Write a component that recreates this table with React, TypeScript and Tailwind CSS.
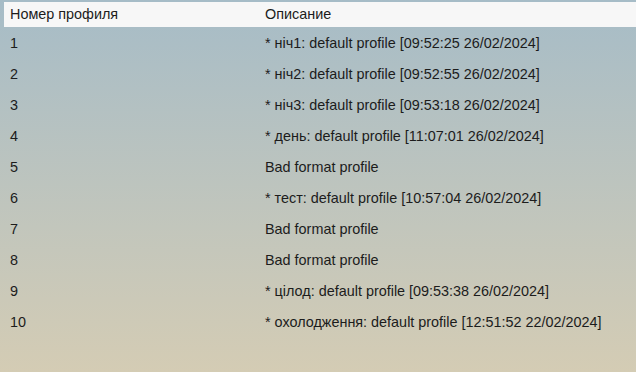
const PROFILES = [
  { id: 1, desc: '* ніч1: default profile [09:52:25 26/02/2024]' },
  { id: 2, desc: '* ніч2: default profile [09:52:55 26/02/2024]' },
  { id: 3, desc: '* ніч3: default profile [09:53:18 26/02/2024]' },
  { id: 4, desc: '* день: default profile [11:07:01 26/02/2024]' },
  { id: 5, desc: 'Bad format profile' },
  { id: 6, desc: '* тест: default profile [10:57:04 26/02/2024]' },
  { id: 7, desc: 'Bad format profile' },
  { id: 8, desc: 'Bad format profile' },
  { id: 9, desc: '* цілод: default profile [09:53:38 26/02/2024]' },
  { id: 10, desc: '* охолодження: default profile [12:51:52 22/02/2024]' }
];

export default function App() {
  return (
    <div
      className="h-screen w-full overflow-hidden bg-gradient-to-b from-[#a6bcc7] to-[#d4ccb4] pt-[2px] pl-[4px] text-[14.4px] text-[#1c1c1c]"
      style={{ fontFamily: '"Liberation Sans", Arial, sans-serif' }}
    >
      <div className="flex h-[25px] items-center bg-[#f7f7f7]">
        <div className="w-[255px] pl-[6px]">Номер профиля</div>
        <div className="pl-[6px]">Описание</div>
      </div>
      {PROFILES.map(p => (
        <div key={p.id} className="flex h-[31px] items-center pt-[2px]">
          <div className="w-[255px] pl-[6px]">{p.id}</div>
          <div className="pl-[6px]">{p.desc}</div>
        </div>
      ))}
    </div>
  );
}
